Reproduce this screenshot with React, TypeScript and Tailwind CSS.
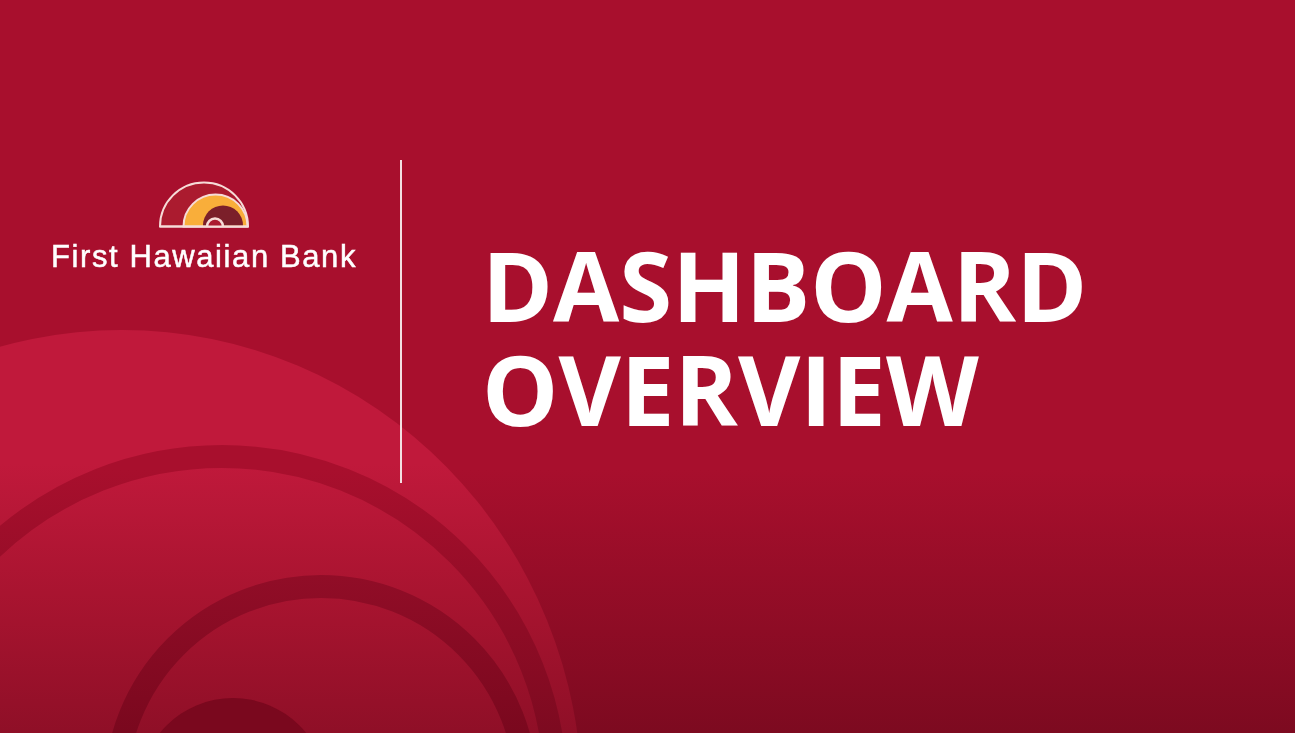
function Backdrop() {
  return (
    <svg className="absolute inset-0" width="1295" height="733" viewBox="0 0 1295 733">
      <defs>
        <linearGradient id="pageBg" gradientUnits="userSpaceOnUse" x1="0" y1="470" x2="0" y2="733">
          <stop offset="0" stopColor="#a80f2d" />
          <stop offset="1" stopColor="#7d0a20" />
        </linearGradient>
        <linearGradient id="disc" gradientUnits="userSpaceOnUse" x1="0" y1="331" x2="0" y2="733">
          <stop offset="0.33" stopColor="#c0193b" />
          <stop offset="0.65" stopColor="#a91430" />
          <stop offset="1" stopColor="#8f0f27" />
        </linearGradient>
        <linearGradient id="ring2" gradientUnits="userSpaceOnUse" x1="0" y1="575" x2="0" y2="733">
          <stop offset="0" stopColor="#910d27" />
          <stop offset="1" stopColor="#7a081e" />
        </linearGradient>
      </defs>
      <rect width="1295" height="733" fill="url(#pageBg)" />
      <ellipse cx="122" cy="800" rx="460" ry="470" fill="url(#disc)" />
      <circle cx="222" cy="790" r="333.5" fill="none" stroke="url(#pageBg)" strokeWidth="23" />
      <circle cx="321" cy="792" r="205.5" fill="none" stroke="url(#ring2)" strokeWidth="23" />
      <circle cx="233" cy="792" r="94" fill="#7a081e" />
    </svg>
  );
}

function Logo() {
  return (
    <svg width="92" height="48" viewBox="0 0 92 48" className="block">
      <path d="M2 45.5 A44 44 0 0 1 90 45.5 Z" fill="#ab1b2f" stroke="#f6dcd8" strokeWidth="2" />
      <path d="M25.5 45.5 A32 32 0 0 1 89.5 45.5 Z" fill="#f9ae3a" stroke="#f6dcd8" strokeWidth="2" />
      <path d="M45 44.5 A20 20 0 0 1 85 44.5 Z" fill="#7b1f2a" />
      <path d="M49 45.5 A8 8 0 0 1 65 45.5" fill="#ab1b2f" stroke="#f6dcd8" strokeWidth="2.6" />
      <path d="M2 45.5 H90" stroke="#f6dcd8" strokeWidth="2" />
    </svg>
  );
}

export default function App() {
  return (
    <div className="relative w-[1295px] h-[733px] overflow-hidden bg-[#a80f2d] text-white">
      <Backdrop />
      <div className="relative flex pt-[160px]">
        <div className="flex w-[400px] flex-col items-center pt-[21px] pl-[8px]">
          <Logo />
          <div className="mt-[11px] font-['Liberation_Sans',Arial,sans-serif] text-[31px] leading-[34px] tracking-[1.6px] whitespace-nowrap [-webkit-text-stroke:0.5px_white] blur-[0.3px]">
            First Hawaiian Bank
          </div>
        </div>
        <div className="w-[2px] h-[323px] bg-[#f3dfe2]" />
        <h1 className="ml-[80px] pt-[73px] font-['Open_Sans',sans-serif] text-[96px] leading-[104px] font-bold">
          DASHBOARD
          <br />
          OVERVIEW
        </h1>
      </div>
    </div>
  );
}
